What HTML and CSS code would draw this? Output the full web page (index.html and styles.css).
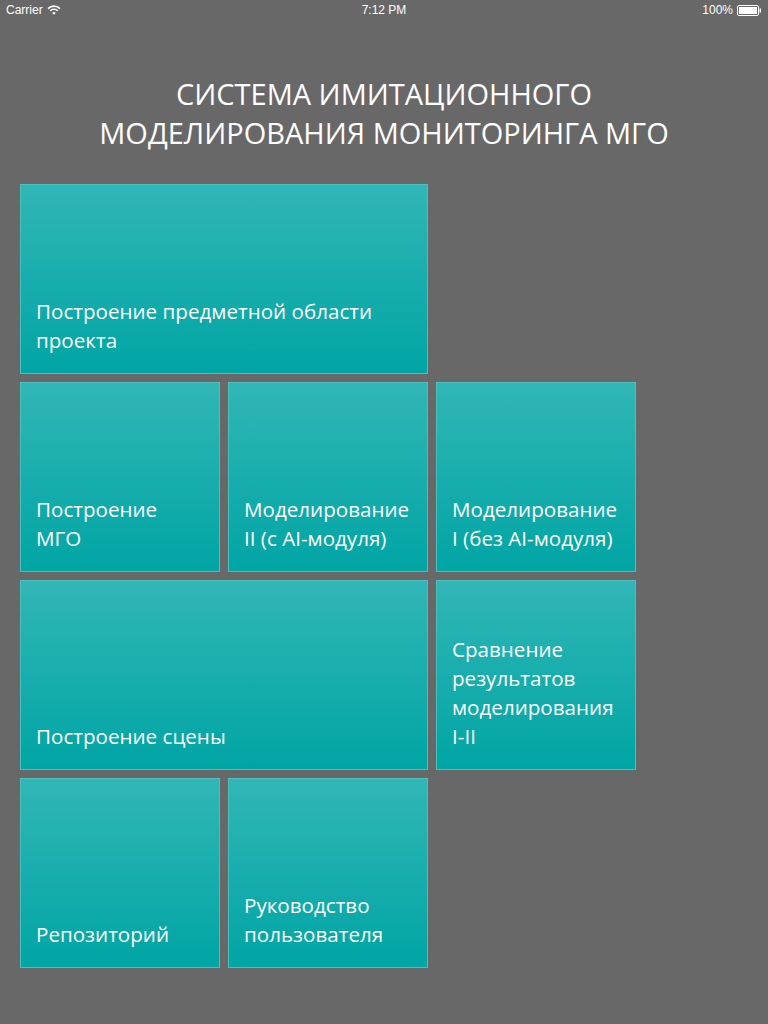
FILE: index.html
```html
<!DOCTYPE html>
<html lang="ru">
<head>
  <meta charset="UTF-8">
  <meta name="viewport" content="width=device-width, initial-scale=1.0">
  <title>Система имитационного моделирования</title>
  <link rel="stylesheet" href="styles.css">
</head>
<body>
  <div class="status-bar">
    <div class="status-left">
      Carrier
      <svg class="wifi" width="14" height="10" viewBox="0 0 14 10">
        <path d="M1 3.6 A8.5 8.5 0 0 1 13 3.6" fill="none" stroke="#fff" stroke-width="1.6"/>
        <path d="M3.2 5.8 A5.4 5.4 0 0 1 10.8 5.8" fill="none" stroke="#fff" stroke-width="1.6"/>
        <path d="M5.2 7.9 L7 9.8 L8.8 7.9 A2.6 2.6 0 0 0 5.2 7.9 Z" fill="#fff"/>
      </svg>
    </div>
    <div class="status-center">7:12 PM</div>
    <div class="status-right">
      100%
      <svg class="battery" width="25" height="11" viewBox="0 0 25 11">
        <rect x="0.5" y="0.5" width="21" height="10" rx="1.5" fill="none" stroke="#fff"/>
        <rect x="2" y="2" width="18" height="7" fill="#fff"/>
        <rect x="22.5" y="3.5" width="1.5" height="4" fill="#fff"/>
      </svg>
    </div>
  </div>

  <h1 class="title">СИСТЕМА ИМИТАЦИОННОГО<br>МОДЕЛИРОВАНИЯ МОНИТОРИНГА МГО</h1>

  <div class="tiles">
    <div class="tile wide row-1">Построение предметной области проекта</div>
    <div class="tile row-2">Построение<br>МГО</div>
    <div class="tile row-2">Моделирование<br>II (с AI-модуля)</div>
    <div class="tile row-2">Моделирование<br>I (без AI-модуля)</div>
    <div class="tile wide row-3">Построение сцены</div>
    <div class="tile row-3">Сравнение<br>результатов<br>моделирования<br>I-II</div>
    <div class="tile row-4">Репозиторий</div>
    <div class="tile row-4">Руководство<br>пользователя</div>
  </div>
</body>
</html>
```
FILE: styles.css
```css
body {
  margin: 0;
  background-color: #686868;
  color: #fff;
  font-family: "Open Sans", sans-serif;
  width: 768px;
  height: 1024px;
}
.status-bar {
  height: 20px;
  display: flex;
  align-items: center;
  justify-content: space-between;
  padding: 0 6px;
  font-family: "Liberation Sans", Arial, sans-serif;
  font-size: 12px;
  position: relative;
}
.status-left,
.status-right {
  display: flex;
  align-items: center;
  gap: 4px;
}
.status-center {
  position: absolute;
  left: 0;
  right: 0;
  text-align: center;
}
.title {
  margin: 0;
  padding-top: 54px;
  font-weight: normal;
  font-size: 29px;
  line-height: 39px;
  text-align: center;
}
.tiles {
  display: grid;
  grid-template-columns: repeat(3, 200px);
  grid-auto-rows: 190px;
  gap: 8px;
  margin: 32px 0 0 20px;
}
.tile {
  display: flex;
  flex-direction: column;
  justify-content: flex-end;
  box-sizing: border-box;
  padding: 0 10px 18px 15px;
  background: linear-gradient(#31b6b6, #00a5a4);
  border: 1px solid #4cc0bf;
  font-size: 20.6px;
  line-height: 29px;
}
.wide {
  grid-column: span 2;
}
.row-1 { grid-row: 1; }
.row-2 { grid-row: 2; }
.row-3 { grid-row: 3; }
.row-4 { grid-row: 4; }
```
